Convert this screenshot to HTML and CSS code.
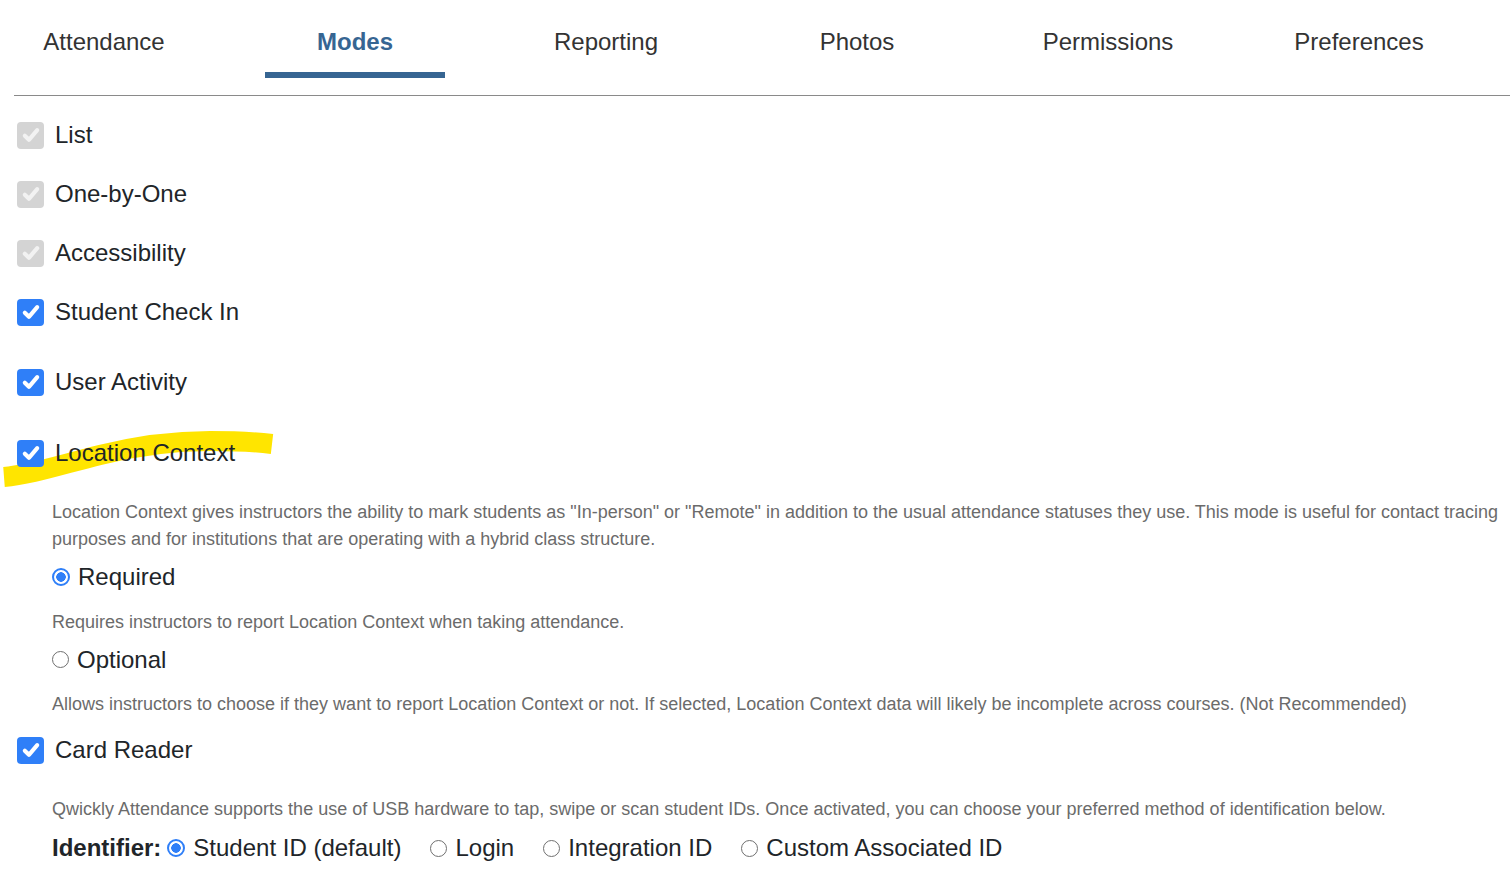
FILE: index.html
```html
<!doctype html>
<html lang="en">
  <head>
    <title>Settings - Modes</title>
    <link rel="stylesheet" href="styles.css">
  </head>
  <body>
    <nav class="tabs">
      <a class="tab">Attendance</a>
      <a class="tab active">Modes</a>
      <a class="tab">Reporting</a>
      <a class="tab">Photos</a>
      <a class="tab">Permissions</a>
      <a class="tab">Preferences</a>
    </nav>

    <div class="modes">
      <label class="mode first">
        <span class="box disabled"><svg viewBox="0 0 16 16"><path d="M3.5 8.5l3 3 6-7"/></svg></span>
        List
      </label>
      <label class="mode">
        <span class="box disabled"><svg viewBox="0 0 16 16"><path d="M3.5 8.5l3 3 6-7"/></svg></span>
        One-by-One
      </label>
      <label class="mode">
        <span class="box disabled"><svg viewBox="0 0 16 16"><path d="M3.5 8.5l3 3 6-7"/></svg></span>
        Accessibility
      </label>
      <label class="mode">
        <span class="box"><svg viewBox="0 0 16 16"><path d="M3.5 8.5l3 3 6-7"/></svg></span>
        Student Check In
      </label>
      <label class="mode wide">
        <span class="box"><svg viewBox="0 0 16 16"><path d="M3.5 8.5l3 3 6-7"/></svg></span>
        User Activity
      </label>
      <div class="highlight-wrap">
        <svg class="marker" width="290" height="80" viewBox="0 0 290 80">
          <path d="M4 54 C 30 52, 60 42, 100 32 S 180 18, 210 18 S 255 19, 272 21" />
        </svg>
        <label class="mode marked">
          <span class="box"><svg viewBox="0 0 16 16"><path d="M3.5 8.5l3 3 6-7"/></svg></span>
          Location Context
        </label>
      </div>

      <div class="sub">
        <p class="desc first-desc">Location Context gives instructors the ability to mark students as "In-person" or "Remote" in addition to the usual attendance statuses they use. This mode is useful for contact tracing purposes and for institutions that are operating with a hybrid class structure.</p>
        <label class="option">
          <span class="radio checked"></span>
          Required
        </label>
        <p class="desc">Requires instructors to report Location Context when taking attendance.</p>
        <label class="option">
          <span class="radio"></span>
          Optional
        </label>
        <p class="desc">Allows instructors to choose if they want to report Location Context or not. If selected, Location Context data will likely be incomplete across courses. (Not Recommended)</p>
      </div>

      <label class="mode card">
        <span class="box"><svg viewBox="0 0 16 16"><path d="M3.5 8.5l3 3 6-7"/></svg></span>
        Card Reader
      </label>

      <div class="sub">
        <p class="desc card-desc">Qwickly Attendance supports the use of USB hardware to tap, swipe or scan student IDs. Once activated, you can choose your preferred method of identification below.</p>
        <div class="identifier">
          <strong>Identifier:</strong>
          <label class="option"><span class="radio checked"></span>Student ID (default)</label>
          <label class="option"><span class="radio"></span>Login</label>
          <label class="option"><span class="radio"></span>Integration ID</label>
          <label class="option"><span class="radio"></span>Custom Associated ID</label>
        </div>
      </div>
    </div>
  </body>
</html>
```

FILE: styles.css
```css
body {
  font-family: "Liberation Sans", Arial, sans-serif;
  background: #fff;
  color: #212529;
  margin: 0;
  padding: 0;
}

.tabs {
  display: flex;
  margin-left: 14px;
  height: 95px;
  border-bottom: 1px solid #8a8a8a;
}

.tab {
  flex-shrink: 0;
  width: 180px;
  margin-right: 71px;
  padding-top: 28px;
  height: 44px;
  line-height: 28px;
  font-size: 24px;
  color: #333;
  text-align: center;
  border-bottom: 6px solid transparent;
}

.tab.active {
  color: #366592;
  font-weight: bold;
  border-bottom-color: #366592;
}

.modes {
  display: flex;
  flex-direction: column;
  align-items: flex-start;
  padding-left: 17px;
}

.mode {
  display: flex;
  align-items: center;
  gap: 11px;
  height: 30px;
  font-size: 24px;
  margin-top: 29px;
}

.mode.first {
  margin-top: 24px;
}

.mode.wide {
  margin-top: 40px;
}

.mode.card {
  margin-top: 17px;
}

.box {
  width: 27px;
  height: 27px;
  border-radius: 4px;
  background: #2f7ff8;
  display: flex;
  align-items: center;
  justify-content: center;
}

.box svg {
  width: 22px;
  height: 22px;
  fill: none;
  stroke: #fff;
  stroke-width: 3;
  stroke-linecap: round;
  stroke-linejoin: round;
}

.box.disabled {
  background: #d4d4d4;
}

.box.disabled svg {
  stroke: #f2f2f2;
}

.highlight-wrap {
  position: relative;
  margin-top: 41px;
}

.mode.marked {
  position: relative;
  margin-top: 0;
}

.marker {
  position: absolute;
  left: -17px;
  top: -15px;
  pointer-events: none;
}

.marker path {
  fill: none;
  stroke: #ffe500;
  stroke-width: 20;
  stroke-linecap: butt;
}

.sub {
  padding-left: 35px;
  padding-right: 10px;
}

.desc {
  font-size: 18px;
  line-height: 27px;
  color: #6b6b6b;
  margin: 16.5px 0 0;
}

.desc.first-desc {
  margin-top: 31px;
}

.desc.card-desc {
  margin-top: 31px;
}

.option {
  display: flex;
  align-items: center;
  gap: 8px;
  height: 30px;
  font-size: 24px;
  margin-top: 9px;
}

.radio {
  width: 15px;
  height: 15px;
  border: 1.5px solid #707070;
  border-radius: 50%;
  background: #fff;
}

.radio.checked {
  border: 2px solid #2f7ff8;
  width: 14px;
  height: 14px;
  background: radial-gradient(circle, #2f7ff8 0 4.5px, #fff 5px);
}

.identifier {
  display: flex;
  align-items: center;
  margin-top: 10px;
  height: 30px;
  font-size: 24px;
}

.identifier strong {
  margin-right: 6px;
}

.identifier .option {
  margin-top: 0;
  margin-right: 29px;
}
```
